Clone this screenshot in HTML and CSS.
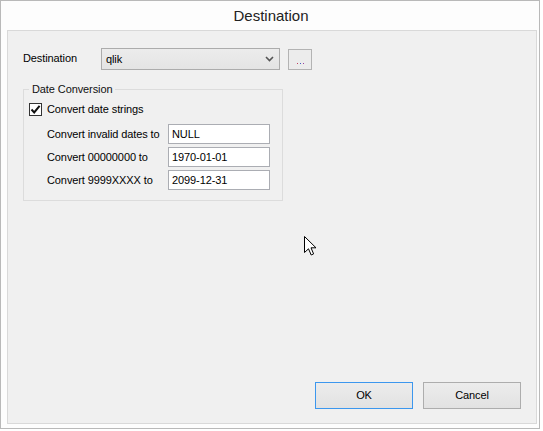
FILE: index.html
```html
<!DOCTYPE html>
<html>
<head>
<meta charset="utf-8">
<link rel="stylesheet" href="styles.css">
</head>
<body>
<div class="window">
  <div class="titlebar">Destination</div>
  <div class="panel">
    <div class="dest-row">
      <span class="dest-label">Destination</span>
      <div class="combo"><span class="combo-text">qlik</span><svg class="chev" width="9" height="6" viewBox="0 0 9 6"><path d="M1 1 L4.5 4.5 L8 1" fill="none" stroke="#555" stroke-width="1.6"/></svg></div>
      <div class="dots-btn"><span class="d1"></span><span class="d2"></span><span class="d3"></span></div>
    </div>
    <fieldset class="group">
      <legend class="legend">Date Conversion</legend>
      <div class="check-row">
        <span class="checkbox"><svg width="11" height="11" viewBox="0 0 11 11"><path d="M1.5 5.5 L4.2 8.4 L9.6 1.8" fill="none" stroke="#111" stroke-width="2"/></svg></span>
        <span class="check-label">Convert date strings</span>
      </div>
      <div class="rows">
        <div class="row"><span class="row-label">Convert invalid dates to</span><div class="textbox">NULL</div></div>
        <div class="row"><span class="row-label">Convert 00000000 to</span><div class="textbox">1970-01-01</div></div>
        <div class="row"><span class="row-label">Convert 9999XXXX to</span><div class="textbox">2099-12-31</div></div>
      </div>
    </fieldset>
    <div class="buttons">
      <div class="btn btn-default">OK</div>
      <div class="btn">Cancel</div>
    </div>
  </div>
  <svg class="cursor" width="13" height="20" viewBox="0 0 13 20"><path d="M0.5 0.5 L0.5 16.5 L4.5 12.8 L7.2 19 L9.6 17.9 L7 11.8 L12 11.8 Z" fill="#fff" stroke="#000" stroke-width="1" stroke-linejoin="miter"/></svg>
</div>
</body>
</html>
```
FILE: styles.css
```css
html, body {
  margin: 0;
  padding: 0;
  background: #ffffff;
}
body {
  font-family: "Liberation Sans", Arial, sans-serif;
  font-size: 11px;
  letter-spacing: -0.1px;
  color: #000;
}
.window {
  position: relative;
  width: 540px;
  height: 429px;
  box-sizing: border-box;
  border: 1px solid #b9b9b9;
  background: #fdfdfd;
  display: flex;
  flex-direction: column;
}
.titlebar {
  height: 29px;
  line-height: 30px;
  text-align: center;
  font-size: 15px;
  letter-spacing: 0;
  color: #222;
  padding-left: 2px;
}
.panel {
  margin-left: 6px;
  margin-right: 2px;
  height: 394px;
  box-sizing: border-box;
  border: 1px solid #d9d9d9;
  background: #f0f0f0;
  padding: 17px 15px 14px 15px;
  display: flex;
  flex-direction: column;
}
.dest-row {
  display: flex;
  align-items: center;
  height: 22px;
}
.dest-label {
  width: 78px;
  margin-top: -2px;
}
.combo {
  width: 179px;
  height: 22px;
  box-sizing: border-box;
  border: 1px solid #acacac;
  background: linear-gradient(#ececec, #e4e4e4);
  display: flex;
  align-items: center;
  justify-content: space-between;
  padding: 0 5px 0 4px;
}
.combo-text {
  margin-top: -1px;
}
.chev {
  display: block;
}
.dots-btn {
  margin-left: 8px;
  width: 24px;
  height: 21px;
  box-sizing: border-box;
  border: 1px solid #b3b3b3;
  background: #ececec;
  display: flex;
  align-items: flex-end;
  justify-content: center;
  gap: 2px;
  padding-bottom: 5px;
}
.dots-btn span {
  width: 1px;
  height: 1px;
  display: block;
}
.d1 { background: #c04060; }
.d2 { background: #4060c0; }
.d3 { background: #a040a0; }
.group {
  margin: 12px 0 0 0;
  width: 260px;
  box-sizing: border-box;
  border: 1px solid #dcdcdc;
  padding: 0 0 10px 5px;
}
.legend {
  padding: 0 3px;
  line-height: 14px;
  color: #111;
}
.check-row {
  display: flex;
  align-items: center;
  margin-top: 6px;
  height: 14px;
}
.checkbox {
  width: 13px;
  height: 13px;
  box-sizing: border-box;
  border: 1px solid #333;
  background: #fff;
  display: flex;
  align-items: center;
  justify-content: center;
}
.checkbox svg {
  display: block;
}
.check-label {
  margin-left: 5px;
}
.rows {
  margin-top: 8px;
  padding-left: 18px;
  display: flex;
  flex-direction: column;
  gap: 3px;
}
.row {
  display: flex;
  align-items: center;
  height: 20px;
}
.row-label {
  width: 121px;
}
.textbox {
  width: 102px;
  height: 20px;
  box-sizing: border-box;
  border: 1px solid #abadb3;
  background: #fff;
  padding: 0 3px;
  line-height: 18px;
}
.buttons {
  margin-top: auto;
  display: flex;
  justify-content: flex-end;
  gap: 10px;
}
.btn {
  width: 98px;
  height: 27px;
  box-sizing: border-box;
  border: 1px solid #adadad;
  background: linear-gradient(#ececec, #e2e2e2);
  display: flex;
  align-items: center;
  justify-content: center;
  padding-bottom: 1px;
}
.btn-default {
  border-color: #3c97ee;
}
.cursor {
  position: absolute;
  left: 303px;
  top: 235px;
}
```
